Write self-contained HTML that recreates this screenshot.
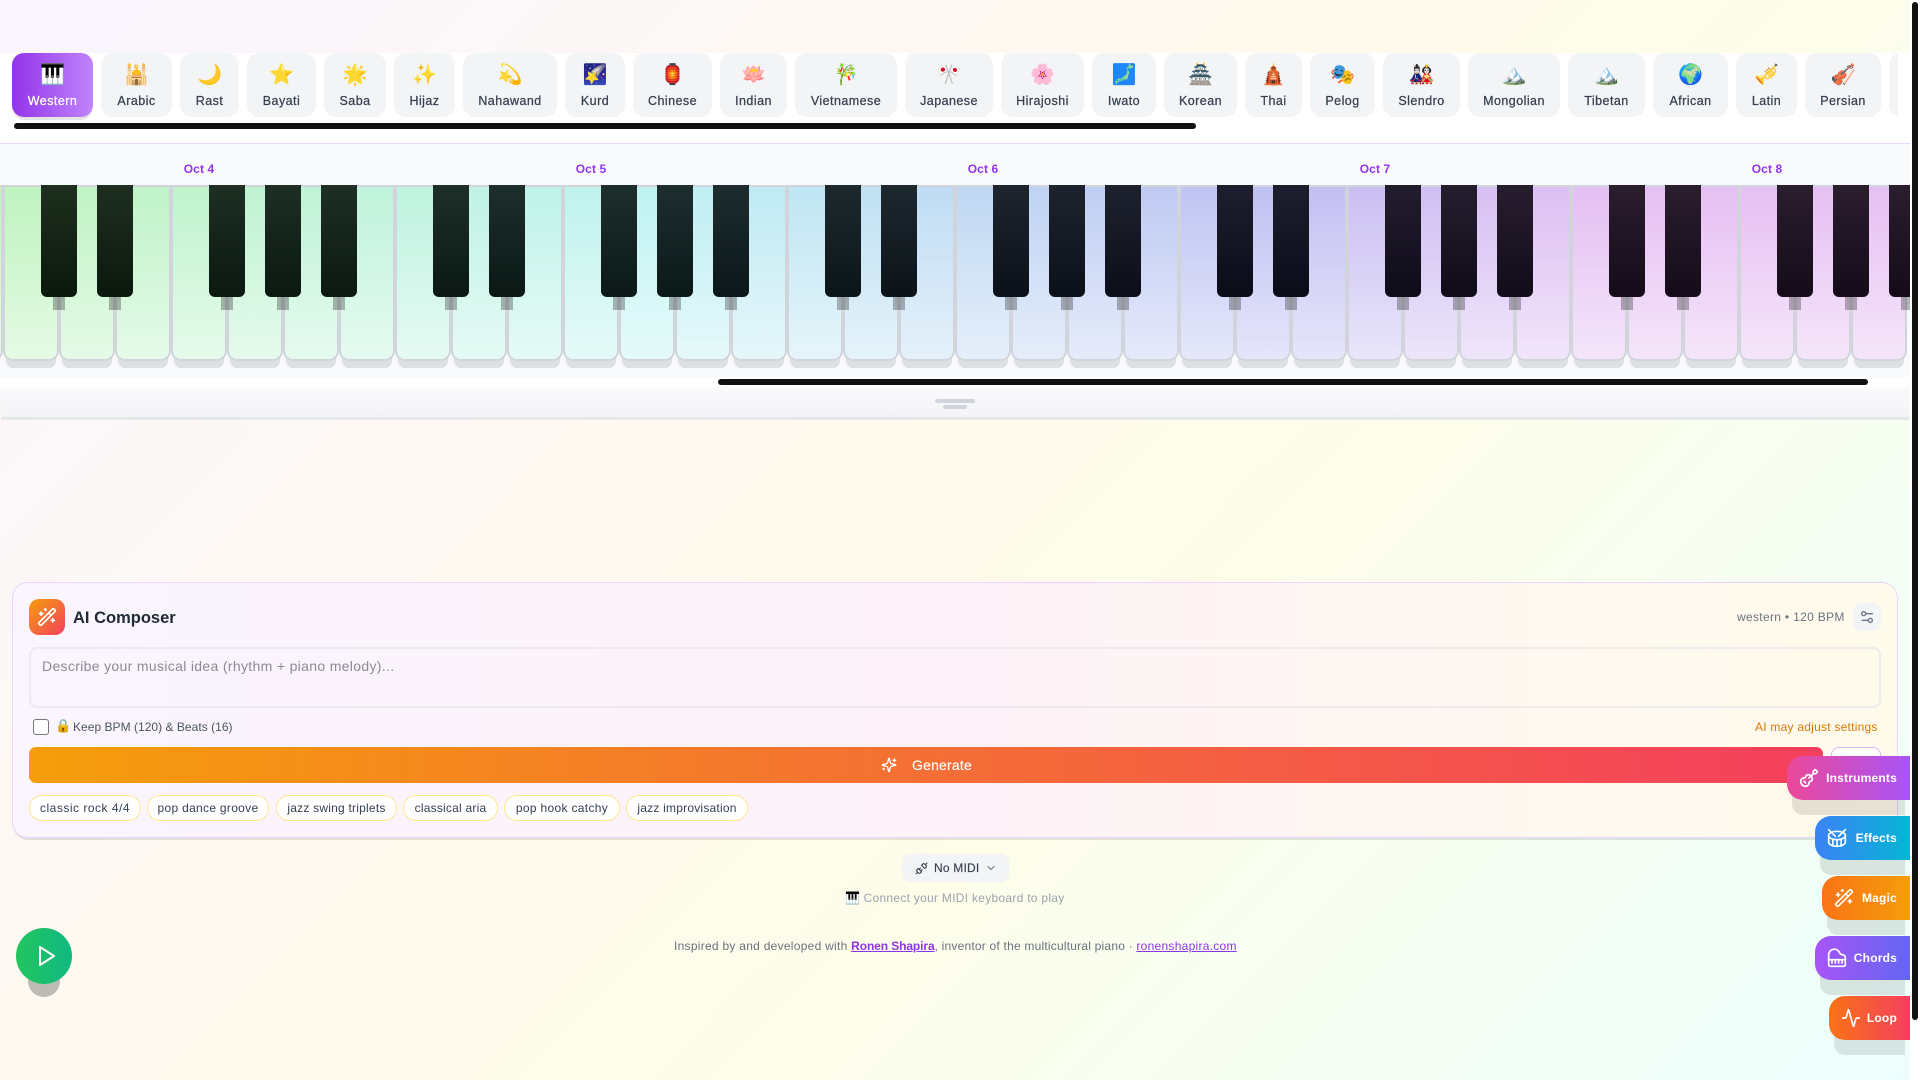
<!DOCTYPE html>
<html lang="en"><head><meta charset="utf-8"><title>Multicultural Piano</title>
<style>
html,body{margin:0;padding:0;width:1920px;height:1080px;overflow:hidden;background:#fff}
*{box-sizing:border-box}
body{font-family:"Liberation Sans","Noto Sans CJK SC",sans-serif;position:relative}
#pg{position:absolute;left:0;top:0;width:1910px;height:1080px;overflow:hidden}
#bg{position:absolute;left:0;top:0;width:1910px;height:1080px;background:linear-gradient(135deg,#faf5ff 0%,#fffaec 45%,#fdfdea 60%,#ecfffe 100%) 0 0/1910px 1145px no-repeat}
.a{position:absolute}
#tabbar{position:absolute;left:0;top:53px;width:1910px;height:90px;background:#fff}
#tabclip{position:absolute;left:0;top:0;width:1898px;height:90px;overflow:hidden}
.t{position:absolute;top:0;height:64px;background:#f3f4f6;border-radius:12px;text-align:center;color:#374151;font-size:12.5px;letter-spacing:.45px;-webkit-text-stroke:.25px}
.t b{display:block;font-weight:400;font-size:20px;line-height:24px;margin-top:9px;letter-spacing:0;-webkit-text-stroke:0;font-family:"Noto Color Emoji","Liberation Sans",sans-serif}
.t span{display:block;line-height:14px;margin-top:8px;white-space:nowrap}
.t.on{background:linear-gradient(90deg,#9333ea,#c084fc);color:#fff;box-shadow:0 4px 0 -1px rgba(0,0,0,.1)}
#tthumb{position:absolute;left:14px;top:70px;width:1182px;height:6px;border-radius:3px;background:#111}
#hdr{position:absolute;left:0;top:143px;width:1910px;height:234px;background:#f9fafb;border-top:1px solid #e9d5ff}
.o{position:absolute;top:169px;transform:translate(-50%,-50%);font-size:12px;font-weight:700;color:#9333ea;letter-spacing:.1px;white-space:nowrap}
#kb{position:absolute;left:0;top:185px;width:1910px;height:192px;overflow:hidden}
.w{--h:min(285,max(calc(120 + var(--i)*5.4),calc(72 + var(--i)*7.5)));position:absolute;top:0;left:calc(3px + var(--i)*56px);width:56px;height:176px;border:2px solid #d1d5db;border-radius:0 0 10px 10px;background:linear-gradient(hsl(var(--h),68%,85%),hsl(var(--h),68%,94%));box-shadow:0 10px 0 -3px rgba(0,0,0,.1)}
.k{--h:min(285,max(calc(122.7 + var(--k)*5.4),calc(75.75 + var(--k)*7.5)));position:absolute;top:0;left:calc(41px + var(--k)*56px);width:36px;height:112px;border-radius:0 0 6px 6px;background:linear-gradient(hsl(var(--h),22%,15%),hsl(var(--h),38%,7%))}
.k:after{content:"";position:absolute;left:12px;top:112px;width:12px;height:13px;background:rgba(0,0,0,.28)}
#ktrack{position:absolute;left:0;top:377px;width:1910px;height:10px;background:#fff}
#kthumb{position:absolute;left:718px;top:379px;width:1150px;height:6px;border-radius:3px;background:#111}
#hdl{position:absolute;left:1px;top:387px;width:1908px;height:33px;background:linear-gradient(#f9fafb,#f3f4f6);border-bottom:3px solid #e5e7eb}
.bar{position:absolute;background:#d1d5db;border-radius:2px}
#card{position:absolute;left:12px;top:582px;width:1886px;height:256px;border:1px solid #e9d5ff;border-radius:16px;background:linear-gradient(90deg,#faf5ff 0%,#fdf2f8 50%,#fffbeb 100%);box-shadow:0 3px 0 -1px rgba(0,0,0,.1)}
#ico{position:absolute;left:29px;top:599px;width:36px;height:36px;border-radius:10px;background:linear-gradient(135deg,#f59e0b,#f43f5e);display:flex;align-items:center;justify-content:center}
#ttl{position:absolute;left:73px;top:607px;font-size:16.5px;line-height:22px;font-weight:700;color:#1f2937;white-space:nowrap}
#bpm{position:absolute;left:1737px;top:610px;font-size:12px;line-height:14px;color:#6b7280;letter-spacing:.32px;white-space:nowrap}
#set{position:absolute;left:1853px;top:603px;width:28px;height:28px;border-radius:8px;background:#f3f4f6;display:flex;align-items:center;justify-content:center}
#ta{position:absolute;left:29px;top:647px;width:1852px;height:61px;border:2px solid rgba(229,231,235,.75);border-radius:8px}
#ph{position:absolute;left:42px;top:658px;font-size:14px;line-height:16px;color:#8b8b93;letter-spacing:.33px;white-space:nowrap}
#cb{position:absolute;left:33px;top:719px;width:16px;height:16px;border:1px solid #767676;border-radius:3px;background:#fff}
#lk{position:absolute;left:55px;top:720px;font-size:13px;line-height:14px;font-family:"Noto Color Emoji",sans-serif}
#keep{position:absolute;left:73px;top:720px;font-size:12px;line-height:14px;color:#4b5563;letter-spacing:.03px;white-space:nowrap}
#adj{position:absolute;left:1755px;top:720px;font-size:12px;line-height:14px;color:#d97706;letter-spacing:.24px;white-space:nowrap}
#gen{position:absolute;left:29px;top:747px;width:1794px;height:36px;border-radius:7px;background:linear-gradient(90deg,#f59e0b,#f43f5e)}
#gt{position:absolute;left:912px;top:757px;font-size:14px;line-height:16px;color:#fff;letter-spacing:.2px;-webkit-text-stroke:.15px;white-space:nowrap}
#gs{position:absolute;left:1831px;top:747px;width:50px;height:36px;border:1px solid #d8b4fe;border-radius:8px;background:#fff}
.c{position:absolute;top:795px;height:26px;border:1px solid #fde68a;border-radius:13px;background:#fff;font-size:12px;line-height:24px;text-align:center;color:#374151;letter-spacing:.22px;white-space:nowrap}
.f{position:absolute;height:44px;border-radius:16px 0 0 16px;color:#fff;font-size:12px;font-weight:700;letter-spacing:.2px;box-shadow:0 20px 0 -5px rgba(0,0,0,.1)}
.f svg{position:absolute;left:12px;top:12px}
.f span{position:absolute;right:13px;top:15px;line-height:14px;white-space:nowrap}
#play{position:absolute;left:16px;top:928px;width:56px;height:56px;border-radius:50%;background:linear-gradient(90deg,#22c55e,#10b981);box-shadow:0 25px 0 -12px rgba(0,0,0,.25)}
#midi{position:absolute;left:902px;top:854px;width:107px;height:28px;border-radius:8px;background:#f3f4f6}
#mt{position:absolute;left:934px;top:861px;font-size:12px;line-height:14px;color:#374151;letter-spacing:.2px;-webkit-text-stroke:.15px;white-space:nowrap}
#con{position:absolute;left:845px;top:891px;font-size:12px;line-height:14px;color:#9ca3af;letter-spacing:.28px;white-space:nowrap}
#con b{font-weight:400;font-family:"Noto Color Emoji",sans-serif;letter-spacing:0}
#ins{position:absolute;left:674px;top:939px;font-size:12px;line-height:14px;color:#6b7280;letter-spacing:.27px;white-space:nowrap}
#ins a{color:#9333ea;text-decoration:underline}
#ins strong{letter-spacing:-.1px}
#ins em{font-style:normal;letter-spacing:.21px}
#sb{position:absolute;left:1912px;top:2px;width:6px;height:1018px;border-radius:3px;background:#111}
svg{display:block}
</style></head><body>
<div id="pg">
<div id="bg"></div>
<div id="tabbar"><div id="tabclip">
<div class="t on" style="left:12px;width:81px"><b>🎹</b><span>Western</span></div>
<div class="t" style="left:101px;width:71px"><b>🕌</b><span>Arabic</span></div>
<div class="t" style="left:180px;width:59px"><b>🌙</b><span>Rast</span></div>
<div class="t" style="left:247px;width:69px"><b>⭐</b><span>Bayati</span></div>
<div class="t" style="left:324px;width:62px"><b>🌟</b><span>Saba</span></div>
<div class="t" style="left:394px;width:61px"><b>✨</b><span>Hijaz</span></div>
<div class="t" style="left:463px;width:94px"><b>💫</b><span>Nahawand</span></div>
<div class="t" style="left:565px;width:60px"><b>🌠</b><span>Kurd</span></div>
<div class="t" style="left:633px;width:79px"><b>🏮</b><span>Chinese</span></div>
<div class="t" style="left:720px;width:67px"><b>🪷</b><span>Indian</span></div>
<div class="t" style="left:795px;width:102px"><b>🎋</b><span>Vietnamese</span></div>
<div class="t" style="left:905px;width:88px"><b>🎌</b><span>Japanese</span></div>
<div class="t" style="left:1001px;width:83px"><b>🌸</b><span>Hirajoshi</span></div>
<div class="t" style="left:1092px;width:64px"><b>🗾</b><span>Iwato</span></div>
<div class="t" style="left:1164px;width:73px"><b>🏯</b><span>Korean</span></div>
<div class="t" style="left:1245px;width:57px"><b>🛕</b><span>Thai</span></div>
<div class="t" style="left:1310px;width:65px"><b>🎭</b><span>Pelog</span></div>
<div class="t" style="left:1383px;width:77px"><b>🎎</b><span>Slendro</span></div>
<div class="t" style="left:1468px;width:92px"><b>🏔️</b><span>Mongolian</span></div>
<div class="t" style="left:1568px;width:77px"><b>🏔️</b><span>Tibetan</span></div>
<div class="t" style="left:1653px;width:75px"><b>🌍</b><span>African</span></div>
<div class="t" style="left:1736px;width:61px"><b>🎺</b><span>Latin</span></div>
<div class="t" style="left:1805px;width:76px"><b>🎻</b><span>Persian</span></div>
<div class="t" style="left:1889px;width:76px"></div>
</div><div id="tthumb"></div></div>

<div id="hdr"></div>
<div class="o" style="left:199px">Oct 4</div>
<div class="o" style="left:591px">Oct 5</div>
<div class="o" style="left:983px">Oct 6</div>
<div class="o" style="left:1375px">Oct 7</div>
<div class="o" style="left:1767px">Oct 8</div>

<div id="kb">
<i class="w" style="--i:-1"></i><i class="w" style="--i:0"></i><i class="w" style="--i:1"></i><i class="w" style="--i:2"></i><i class="w" style="--i:3"></i><i class="w" style="--i:4"></i><i class="w" style="--i:5"></i><i class="w" style="--i:6"></i><i class="w" style="--i:7"></i><i class="w" style="--i:8"></i><i class="w" style="--i:9"></i><i class="w" style="--i:10"></i><i class="w" style="--i:11"></i><i class="w" style="--i:12"></i><i class="w" style="--i:13"></i><i class="w" style="--i:14"></i><i class="w" style="--i:15"></i><i class="w" style="--i:16"></i><i class="w" style="--i:17"></i><i class="w" style="--i:18"></i><i class="w" style="--i:19"></i><i class="w" style="--i:20"></i><i class="w" style="--i:21"></i><i class="w" style="--i:22"></i><i class="w" style="--i:23"></i><i class="w" style="--i:24"></i><i class="w" style="--i:25"></i><i class="w" style="--i:26"></i><i class="w" style="--i:27"></i><i class="w" style="--i:28"></i><i class="w" style="--i:29"></i><i class="w" style="--i:30"></i><i class="w" style="--i:31"></i><i class="w" style="--i:32"></i><i class="w" style="--i:33"></i>
<i class="k" style="--k:0"></i><i class="k" style="--k:1"></i><i class="k" style="--k:3"></i><i class="k" style="--k:4"></i><i class="k" style="--k:5"></i><i class="k" style="--k:7"></i><i class="k" style="--k:8"></i><i class="k" style="--k:10"></i><i class="k" style="--k:11"></i><i class="k" style="--k:12"></i><i class="k" style="--k:14"></i><i class="k" style="--k:15"></i><i class="k" style="--k:17"></i><i class="k" style="--k:18"></i><i class="k" style="--k:19"></i><i class="k" style="--k:21"></i><i class="k" style="--k:22"></i><i class="k" style="--k:24"></i><i class="k" style="--k:25"></i><i class="k" style="--k:26"></i><i class="k" style="--k:28"></i><i class="k" style="--k:29"></i><i class="k" style="--k:31"></i><i class="k" style="--k:32"></i><i class="k" style="--k:33"></i>
</div>
<div id="ktrack"></div><div id="kthumb"></div>
<div id="hdl"></div>
<div class="bar" style="left:935px;top:399px;width:40px;height:4px"></div>
<div class="bar" style="left:943px;top:405px;width:24px;height:4px"></div>

<div id="card"></div>
<div id="ico"><svg width="20" height="20" viewBox="0 0 24 24" fill="none" stroke="#fff" stroke-width="2" stroke-linecap="round" stroke-linejoin="round"><path d="m21.64 3.64-1.28-1.28a1.21 1.21 0 0 0-1.72 0L2.36 18.64a1.21 1.21 0 0 0 0 1.72l1.28 1.28a1.2 1.2 0 0 0 1.72 0L21.64 5.36a1.2 1.2 0 0 0 0-1.72"/><path d="m14 7 3 3"/><path d="M5 6v4"/><path d="M19 14v4"/><path d="M10 2v2"/><path d="M7 8H3"/><path d="M21 16h-4"/><path d="M11 3H9"/></svg></div>
<div id="ttl">AI Composer</div>
<div id="bpm">western • 120 BPM</div>
<div id="set"><svg width="16" height="16" viewBox="0 0 24 24" fill="none" stroke="#6b7280" stroke-width="2" stroke-linecap="round" stroke-linejoin="round"><path d="M20 7h-9"/><path d="M14 17H5"/><circle cx="17" cy="17" r="3"/><circle cx="7" cy="7" r="3"/></svg></div>
<div id="ta"></div>
<div id="ph">Describe your musical idea (rhythm + piano melody)...</div>
<div id="cb"></div><div id="lk">🔒</div>
<div id="keep">Keep BPM (120) &amp; Beats (16)</div>
<div id="adj">AI may adjust settings</div>
<div id="gs"></div>
<div id="gen"></div>
<svg class="a" style="left:881px;top:757px" width="16" height="16" viewBox="0 0 24 24" fill="none" stroke="#fff" stroke-width="2" stroke-linecap="round" stroke-linejoin="round"><path d="M9.937 15.5A2 2 0 0 0 8.5 14.063l-6.135-1.582a.5.5 0 0 1 0-.962L8.5 9.936A2 2 0 0 0 9.937 8.5l1.582-6.135a.5.5 0 0 1 .963 0L14.063 8.5A2 2 0 0 0 15.5 9.937l6.135 1.581a.5.5 0 0 1 0 .964L15.5 14.063a2 2 0 0 0-1.437 1.437l-1.582 6.135a.5.5 0 0 1-.963 0z"/><path d="M20 3v4"/><path d="M22 5h-4"/><path d="M4 17v2"/><path d="M5 18H3"/></svg>
<div id="gt">Generate</div>
<div class="c" style="left:29px;width:112px;letter-spacing:.5px">classic rock 4/4</div>
<div class="c" style="left:147px;width:122px;letter-spacing:.3px">pop dance groove</div>
<div class="c" style="left:276px;width:121px">jazz swing triplets</div>
<div class="c" style="left:403px;width:95px">classical aria</div>
<div class="c" style="left:504px;width:116px;letter-spacing:.32px">pop hook catchy</div>
<div class="c" style="left:626px;width:122px">jazz improvisation</div>

<div id="midi"></div>
<svg class="a" style="left:915px;top:862px" width="13" height="13" viewBox="0 0 24 24" fill="none" stroke="#374151" stroke-width="2" stroke-linecap="round" stroke-linejoin="round"><path d="m19 5 3-3"/><path d="m2 22 3-3"/><path d="M6.3 20.3a2.4 2.4 0 0 0 3.4 0L12 18l-6-6-2.3 2.3a2.4 2.4 0 0 0 0 3.4Z"/><path d="M7.5 13.5 10 11"/><path d="M10.5 16.5 13 14"/><path d="m12 6 6 6 2.3-2.3a2.4 2.4 0 0 0 0-3.4l-2.6-2.6a2.4 2.4 0 0 0-3.4 0Z"/></svg>
<div id="mt">No MIDI</div>
<svg class="a" style="left:985px;top:862px" width="12" height="12" viewBox="0 0 24 24" fill="none" stroke="#6b7280" stroke-width="2" stroke-linecap="round" stroke-linejoin="round"><path d="m6 9 6 6 6-6"/></svg>
<div id="con"><b>🎹</b> Connect your MIDI keyboard to play</div>
<div id="ins">Inspired by and developed with <a href="#"><strong>Ronen Shapira</strong></a><em>, inventor of the multicultural piano · </em><a href="#">ronenshapira.com</a></div>

<div id="play"><svg class="a" style="left:19px;top:16px" width="24" height="24" viewBox="0 0 24 24" fill="none" stroke="#fff" stroke-width="2" stroke-linecap="round" stroke-linejoin="round"><polygon points="5 3 19 12 5 21 5 3"/></svg></div>

<div class="f" style="left:1787px;top:756px;width:123px;background:linear-gradient(90deg,#ec4899,#a855f7)"><svg width="20" height="20" viewBox="0 0 24 24" fill="none" stroke="#fff" stroke-width="2" stroke-linecap="round" stroke-linejoin="round"><path d="m11.9 12.1 4.514-4.514"/><path d="M20.1 2.3a1 1 0 0 0-1.4 0l-1.114 1.114A2 2 0 0 0 17 4.828v1.344a2 2 0 0 1-.586 1.414A2 2 0 0 1 17.828 7h1.344a2 2 0 0 0 1.414-.586L21.7 5.3a1 1 0 0 0 0-1.4z"/><path d="m6 16 2 2"/><path d="M8.23 9.85A3 3 0 0 1 11 8a5 5 0 0 1 5 5 3 3 0 0 1-1.85 2.77l-.92.38A2 2 0 0 0 12 18a4 4 0 0 1-4 4 6 6 0 0 1-6-6 4 4 0 0 1 4-4 2 2 0 0 0 1.85-1.23z"/></svg><span>Instruments</span></div>
<div class="f" style="left:1815px;top:816px;width:95px;background:linear-gradient(90deg,#3b82f6,#06b6d4)"><svg width="20" height="20" viewBox="0 0 24 24" fill="none" stroke="#fff" stroke-width="2" stroke-linecap="round" stroke-linejoin="round"><path d="m2 2 8 8"/><path d="m22 2-8 8"/><ellipse cx="12" cy="9" rx="10" ry="5"/><path d="M7 13.4v7.9"/><path d="M12 14v8"/><path d="M17 13.4v7.9"/><path d="M2 9v8a10 5 0 0 0 20 0V9"/></svg><span>Effects</span></div>
<div class="f" style="left:1822px;top:876px;width:88px;background:linear-gradient(90deg,#f97316,#f59e0b)"><svg width="20" height="20" viewBox="0 0 24 24" fill="none" stroke="#fff" stroke-width="2" stroke-linecap="round" stroke-linejoin="round"><path d="m21.64 3.64-1.28-1.28a1.21 1.21 0 0 0-1.72 0L2.36 18.64a1.21 1.21 0 0 0 0 1.72l1.28 1.28a1.2 1.2 0 0 0 1.72 0L21.64 5.36a1.2 1.2 0 0 0 0-1.72"/><path d="m14 7 3 3"/><path d="M5 6v4"/><path d="M19 14v4"/><path d="M10 2v2"/><path d="M7 8H3"/><path d="M21 16h-4"/><path d="M11 3H9"/></svg><span>Magic</span></div>
<div class="f" style="left:1815px;top:936px;width:95px;background:linear-gradient(90deg,#a855f7,#6366f1)"><svg width="20" height="20" viewBox="0 0 24 24" fill="none" stroke="#fff" stroke-width="2" stroke-linecap="round" stroke-linejoin="round"><path d="M18.5 8c-1.4 0-2.6-.8-3.2-2A6.87 6.87 0 0 0 2 9v11a2 2 0 0 0 2 2h16a2 2 0 0 0 2-2v-8.5C22 9.6 20.4 8 18.5 8"/><path d="M2 14h20"/><path d="M6 14v4"/><path d="M10 14v4"/><path d="M14 14v4"/><path d="M18 14v4"/></svg><span>Chords</span></div>
<div class="f" style="left:1829px;top:996px;width:81px;background:linear-gradient(90deg,#f97316,#f43f5e)"><svg width="20" height="20" viewBox="0 0 24 24" fill="none" stroke="#fff" stroke-width="2" stroke-linecap="round" stroke-linejoin="round"><path d="M22 12h-2.48a2 2 0 0 0-1.93 1.46l-2.35 8.36a.25.25 0 0 1-.48 0L9.24 2.18a.25.25 0 0 0-.48 0l-2.35 8.36A2 2 0 0 1 4.49 12H2"/></svg><span>Loop</span></div>
</div>
<div id="sb"></div>
</body></html>
